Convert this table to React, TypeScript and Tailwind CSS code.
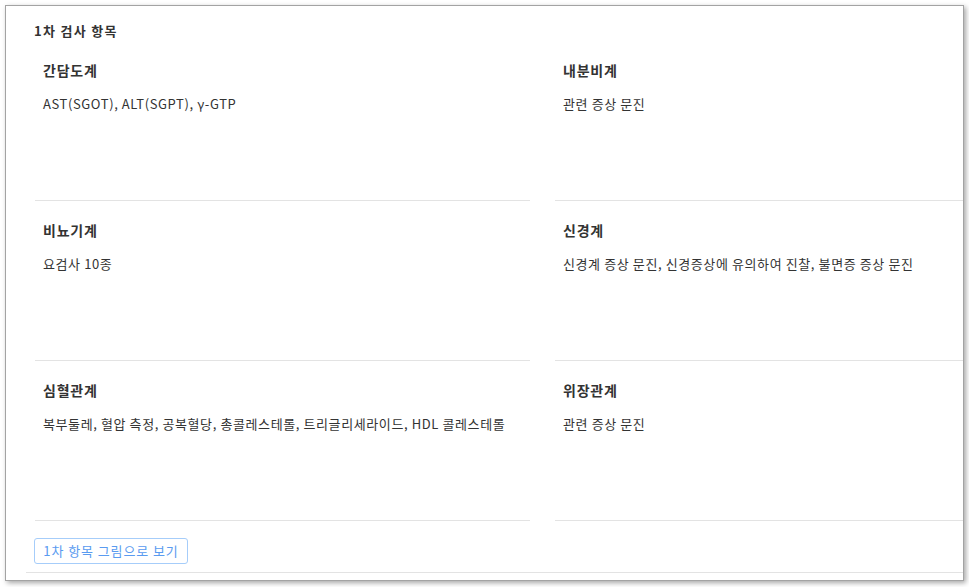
const items = [
  { title: "간담도계", desc: "AST(SGOT), ALT(SGPT), γ-GTP" },
  { title: "내분비계", desc: "관련 증상 문진" },
  { title: "비뇨기계", desc: "요검사 10종" },
  { title: "신경계", desc: "신경계 증상 문진, 신경증상에 유의하여 진찰, 불면증 증상 문진" },
  { title: "심혈관계", desc: "복부둘레, 혈압 측정, 공복혈당, 총콜레스테롤, 트리글리세라이드, HDL 콜레스테롤" },
  { title: "위장관계", desc: "관련 증상 문진" },
];

export default function App() {
  return (
    <div
      className="w-[969px] h-[587px] bg-white pl-[5px] pt-[5px] text-[#333]"
      style={{ fontFamily: '"Noto Sans CJK KR", "Noto Sans", sans-serif' }}
    >
      <div className="w-[959px] h-[576px] border border-[#a3a3a3] bg-white shadow-[2px_2px_5px_rgba(0,0,0,0.35)] overflow-hidden">
        <div className="pl-[28px] pt-[15px]">
          <h1 className="text-[13px] font-bold leading-5 tracking-[1.3px] text-[#333]">1차 검사 항목</h1>
          <div className="grid grid-cols-[495px_495px] gap-x-[25px] w-[1015px] ml-[1px]">
            {items.map((it) => (
              <div key={it.title} className="h-[160px] border-b border-[#e3e3e3] px-2 pt-[19px]">
                <h2 className="text-[14px] font-bold leading-5 tracking-[0.8px] text-[#333]">{it.title}</h2>
                <p className="mt-[14px] text-[13px] leading-5 tracking-[0.6px] text-[#333] whitespace-nowrap">{it.desc}</p>
              </div>
            ))}
          </div>
          <div className="pt-[16px] pb-[8px] border-b border-[#e3e3e3] -ml-[8px] pl-[8px]">
            <button className="h-[26px] w-[154px] rounded-[3px] border border-[#a6cdfa] bg-white text-[13px] text-[#5a9bf0] tracking-[0.9px] leading-none">
              1차 항목 그림으로 보기
            </button>
          </div>
        </div>
      </div>
    </div>
  );
}
